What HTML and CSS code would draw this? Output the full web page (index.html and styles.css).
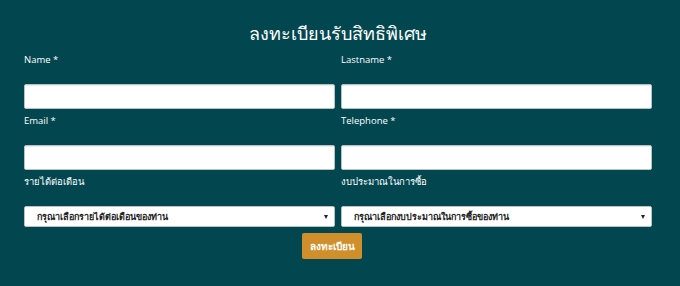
FILE: index.html
```html
<!DOCTYPE html>
<html lang="th">
<head>
  <meta charset="UTF-8">
  <meta name="viewport" content="width=device-width, initial-scale=1.0">
  <title>ลงทะเบียนรับสิทธิพิเศษ</title>
  <link rel="stylesheet" href="styles.css">
</head>
<body>
  <section class="register">
    <h1 class="register-title">ลงทะเบียนรับสิทธิพิเศษ</h1>
    <form class="register-form">
      <div class="field">
        <label for="name">Name *</label>
        <input type="text" id="name">
      </div>
      <div class="field">
        <label for="lastname">Lastname *</label>
        <input type="text" id="lastname">
      </div>
      <div class="field">
        <label for="email">Email *</label>
        <input type="email" id="email">
      </div>
      <div class="field">
        <label for="telephone">Telephone *</label>
        <input type="tel" id="telephone">
      </div>
      <div class="field">
        <label for="income">รายได้ต่อเดือน</label>
        <div class="select-wrap">
          <select id="income">
            <option>กรุณาเลือกรายได้ต่อเดือนของท่าน</option>
          </select>
        </div>
      </div>
      <div class="field">
        <label for="budget">งบประมาณในการซื้อ</label>
        <div class="select-wrap">
          <select id="budget">
            <option>กรุณาเลือกงบประมาณในการซื้อของท่าน</option>
          </select>
        </div>
      </div>
      <div class="actions">
        <button type="submit">ลงทะเบียน</button>
      </div>
    </form>
  </section>
</body>
</html>
```

FILE: styles.css
```css
body {
  margin: 0;
  padding: 0;
  background-color: #02474f;
  font-family: "Open Sans", "Noto Sans", sans-serif;
  color: #fff;
}
.register {
  padding: 22px 28px 0 24px;
}
.register-title {
  margin: 0 0 8px;
  font-size: 18px;
  line-height: 22px;
  font-weight: 500;
  text-align: center;
}
.register-form {
  display: grid;
  grid-template-columns: 311px 311px;
  column-gap: 6px;
  row-gap: 4px;
}
.field label {
  display: block;
  font-size: 9.5px;
  line-height: 16px;
  margin-bottom: 16px;
}
.field input {
  display: block;
  box-sizing: border-box;
  width: 100%;
  height: 25px;
  border: 1px solid #b9c3c5;
  border-radius: 2px;
  background: #fff;
  box-shadow: inset 0 1px 1px rgba(0, 0, 0, 0.08);
}
.select-wrap {
  position: relative;
}
.select-wrap::after {
  content: "";
  position: absolute;
  right: 7px;
  top: 9px;
  border-left: 2px solid transparent;
  border-right: 2px solid transparent;
  border-top: 4px solid #222;
}
.field select {
  display: block;
  box-sizing: border-box;
  width: 100%;
  height: 21px;
  padding: 0 0 0 12px;
  border: 1px solid #b9c3c5;
  border-radius: 2px;
  background: #fff;
  color: #222;
  font-family: inherit;
  font-size: 9px;
  font-weight: bold;
  appearance: none;
  -webkit-appearance: none;
}
.actions {
  grid-column: 1 / -1;
  display: flex;
  justify-content: center;
  padding-top: 2px;
  margin-left: -12px;
}
.actions button {
  width: 60px;
  height: 26px;
  padding: 0;
  border: none;
  border-radius: 2px;
  background-color: #d08f2b;
  color: #fff;
  font-family: inherit;
  font-size: 10px;
  font-weight: bold;
  cursor: pointer;
}
```
